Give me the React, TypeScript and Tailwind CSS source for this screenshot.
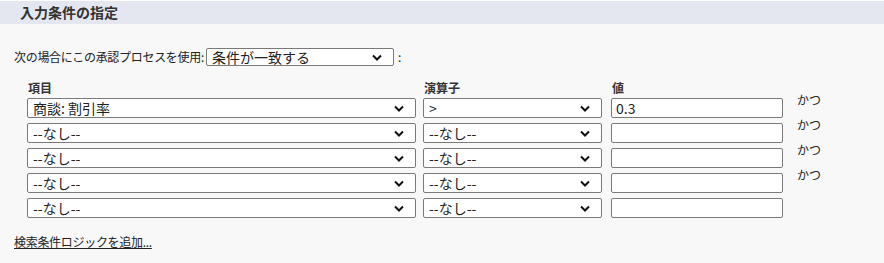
import React from 'react';

const rows = [
  { field: '商談: 割引率', op: '>', value: '0.3', and: true },
  { field: '--なし--', op: '--なし--', value: '', and: true },
  { field: '--なし--', op: '--なし--', value: '', and: true },
  { field: '--なし--', op: '--なし--', value: '', and: true },
  { field: '--なし--', op: '--なし--', value: '', and: false },
];

function Chevron() {
  return (
    <svg width="10" height="7" viewBox="0 0 10 7" className="shrink-0">
      <polyline points="1,1.5 5,5.5 9,1.5" fill="none" stroke="#111" strokeWidth="2" />
    </svg>
  );
}

// Fake dropdown: flat box, text on the left and a heavy chevron on the right.
function Dropdown({ label, className }: { label: string; className: string }) {
  return (
    <div
      className={`flex items-center justify-between rounded-[2px] border border-[#7a7a7a] bg-white pl-[5px] pr-[11px] text-[14px] leading-[16px] ${className}`}
    >
      <span className="whitespace-nowrap">{label}</span>
      <Chevron />
    </div>
  );
}

export default function App() {
  return (
    <div className="h-[263px] w-[884px] overflow-hidden bg-[#f8f8f8] font-['Noto_Sans_CJK_JP',sans-serif] text-[12px] text-[#222]">
      <div className="flex h-[24px] items-center border-t border-white bg-[#e5e7f0] pl-[20px] text-[14px] font-bold text-[#333]">
        入力条件の指定
      </div>

      <div className="px-[14px] pt-[24px]">
        <div className="flex h-[18px] items-center">
          <span className="tracking-[-0.3px]">次の場合にこの承認プロセスを使用:</span>
          <Dropdown label="条件が一致する" className="ml-[2px] h-[18px] w-[188px]" />
          <span className="ml-[4px]">:</span>
        </div>

        <div className="ml-[13px] mt-[14px]">
          <div className="flex h-[16px] items-center font-bold text-[#333]">
            <div className="w-[396px] pl-[1px]">項目</div>
            <div className="w-[188px] pl-[1px]">演算子</div>
            <div className="pl-[1px]">値</div>
          </div>

          <div className="mt-[2px] flex flex-col gap-[5px]">
            {rows.map((r, i) => (
              <div key={i} className="flex h-[20px]">
                <Dropdown label={r.field} className="h-[20px] w-[389px]" />
                <Dropdown label={r.op} className="ml-[7px] h-[20px] w-[179px]" />
                <div className="ml-[9px] flex h-[20px] w-[172px] items-center rounded-[2px] border border-[#7a7a7a] bg-white pl-[4px] text-[14px] leading-[16px]">
                  {r.value}
                </div>
                {r.and && <span className="-mt-[5px] ml-[14px] leading-[14px]">かつ</span>}
              </div>
            ))}
          </div>
        </div>

        <a href="#" className="mt-[17px] block w-fit leading-[14px] tracking-[-0.3px] text-[#222] underline">
          検索条件ロジックを追加...
        </a>
      </div>
    </div>
  );
}
